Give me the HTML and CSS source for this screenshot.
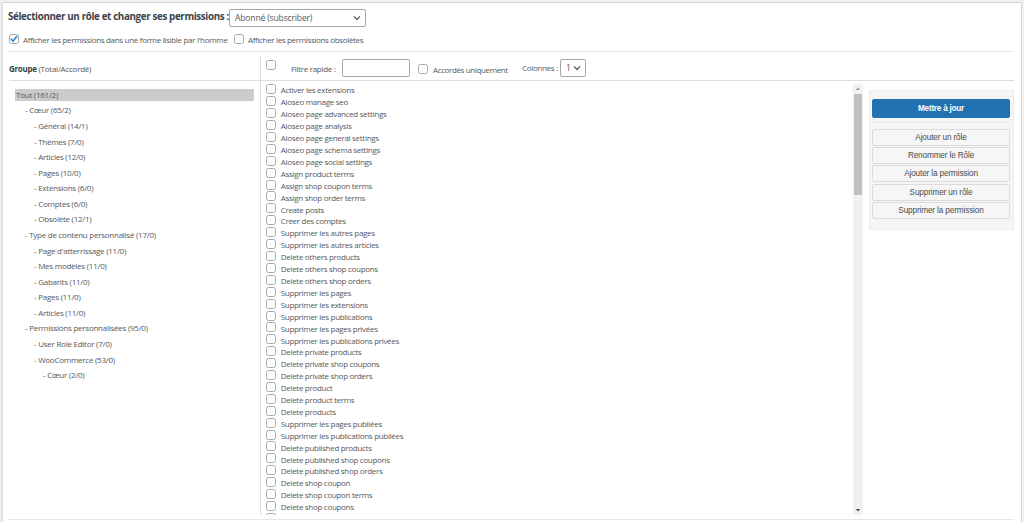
FILE: index.html
```
<!DOCTYPE html>
<html lang="fr">
<head>
<meta charset="utf-8">
<title>User Role Editor</title>
<link rel="stylesheet" href="styles.css">
</head>
<body>
<main class="panel">
  <header class="role-bar">
    <span class="role-label">Sélectionner un rôle et changer ses permissions :</span>
    <div class="select role-select"><span>Abonné (subscriber)</span><svg class="chevron" viewBox="0 0 8 8"><path d="M1 2.3 4 5.5 7 2.3"/></svg></div>
  </header>
  <div class="options">
    <span class="check"><svg viewBox="0 0 10 10"><path d="M2 4.7 4.1 7.2 8 2"/></svg></span><span class="opt-first">Afficher les permissions dans une forme lisible par l'homme</span>
    <span class="check"></span><span class="opt-second">Afficher les permissions obsolètes</span>
  </div>
  <section class="editor">
    <div class="headings">
      <div class="group-title"><b>Groupe</b> <span>(Total/Accordé)</span></div>
      <div class="filters">
        <span class="check check-all"></span>
        <span class="filter-label">Filtre rapide :</span>
        <div class="input"></div>
        <span class="check check-granted"></span>
        <span class="granted">Accordés uniquement</span>
        <span class="columns">Colonnes :</span>
        <div class="select col-select"><span>1</span><svg class="chevron" viewBox="0 0 8 8"><path d="M1 2.3 4 5.5 7 2.3"/></svg></div>
      </div>
    </div>
    <div class="content">
      <ul class="tree">
        <li class="selected"><span>Tout (161/2)</span></li>
        <li class="l1"><span>- Cœur (65/2)</span></li>
        <li class="l2"><span>- Général (14/1)</span></li>
        <li class="l2"><span>- Thèmes (7/0)</span></li>
        <li class="l2"><span>- Articles (12/0)</span></li>
        <li class="l2"><span>- Pages (10/0)</span></li>
        <li class="l2"><span>- Extensions (6/0)</span></li>
        <li class="l2"><span>- Comptes (6/0)</span></li>
        <li class="l2"><span>- Obsolète (12/1)</span></li>
        <li class="l1"><span>- Type de contenu personnalisé (17/0)</span></li>
        <li class="l2"><span>- Page d'atterrissage (11/0)</span></li>
        <li class="l2"><span>- Mes modèles (11/0)</span></li>
        <li class="l2"><span>- Gabarits (11/0)</span></li>
        <li class="l2"><span>- Pages (11/0)</span></li>
        <li class="l2"><span>- Articles (11/0)</span></li>
        <li class="l1"><span>- Permissions personnalisées (95/0)</span></li>
        <li class="l2"><span>- User Role Editor (7/0)</span></li>
        <li class="l2"><span>- WooCommerce (53/0)</span></li>
        <li class="l3"><span>- Cœur (2/0)</span></li>
      </ul>
      <ul class="perms">
        <li><i class="check"></i><span>Activer les extensions</span></li>
        <li><i class="check"></i><span>Aioseo manage seo</span></li>
        <li><i class="check"></i><span>Aioseo page advanced settings</span></li>
        <li><i class="check"></i><span>Aioseo page analysis</span></li>
        <li><i class="check"></i><span>Aioseo page general settings</span></li>
        <li><i class="check"></i><span>Aioseo page schema settings</span></li>
        <li><i class="check"></i><span>Aioseo page social settings</span></li>
        <li><i class="check"></i><span>Assign product terms</span></li>
        <li><i class="check"></i><span>Assign shop coupon terms</span></li>
        <li><i class="check"></i><span>Assign shop order terms</span></li>
        <li><i class="check"></i><span>Create posts</span></li>
        <li><i class="check"></i><span>Créer des comptes</span></li>
        <li><i class="check"></i><span>Supprimer les autres pages</span></li>
        <li><i class="check"></i><span>Supprimer les autres articles</span></li>
        <li><i class="check"></i><span>Delete others products</span></li>
        <li><i class="check"></i><span>Delete others shop coupons</span></li>
        <li><i class="check"></i><span>Delete others shop orders</span></li>
        <li><i class="check"></i><span>Supprimer les pages</span></li>
        <li><i class="check"></i><span>Supprimer les extensions</span></li>
        <li><i class="check"></i><span>Supprimer les publications</span></li>
        <li><i class="check"></i><span>Supprimer les pages privées</span></li>
        <li><i class="check"></i><span>Supprimer les publications privées</span></li>
        <li><i class="check"></i><span>Delete private products</span></li>
        <li><i class="check"></i><span>Delete private shop coupons</span></li>
        <li><i class="check"></i><span>Delete private shop orders</span></li>
        <li><i class="check"></i><span>Delete product</span></li>
        <li><i class="check"></i><span>Delete product terms</span></li>
        <li><i class="check"></i><span>Delete products</span></li>
        <li><i class="check"></i><span>Supprimer les pages publiées</span></li>
        <li><i class="check"></i><span>Supprimer les publications publiées</span></li>
        <li><i class="check"></i><span>Delete published products</span></li>
        <li><i class="check"></i><span>Delete published shop coupons</span></li>
        <li><i class="check"></i><span>Delete published shop orders</span></li>
        <li><i class="check"></i><span>Delete shop coupon</span></li>
        <li><i class="check"></i><span>Delete shop coupon terms</span></li>
        <li><i class="check"></i><span>Delete shop coupons</span></li>
        <li><i class="check"></i></li>
      </ul>
      <div class="scrollbar"><svg viewBox="0 0 10 10"><path class="dim" d="M2.6 6 5 3.5 7.4 6z"/></svg><div class="thumb"></div><svg class="down" viewBox="0 0 10 10"><path d="M2.6 4 5 6.5 7.4 4z"/></svg></div>
      <aside class="actions">
        <button class="primary">Mettre à jour</button>
        <hr>
        <button>Ajouter un rôle</button>
        <button>Renommer le Rôle</button>
        <button>Ajouter la permission</button>
        <button>Supprimer un rôle</button>
        <button>Supprimer la permission</button>
      </aside>
    </div>
  </section>
</main>
</body>
</html>
```
FILE: styles.css
```
* { box-sizing: border-box; }
body {
  margin: 0;
  height: 522px;
  overflow: hidden;
  padding: 2px 2px 0 1px;
  background: #f0f0f1;
  font-family: "Open Sans", "Noto Sans", sans-serif;
  font-size: 8px;
  line-height: 12px;
  letter-spacing: -0.3px;
  color: #55595e;
  white-space: nowrap;
}
ul { list-style: none; margin: 0; padding: 0; }
.panel {
  height: 530px;
  padding: 6px 6px 0 5px;
  background: #fff;
  border: 1px solid #d5d6d8;
  border-left: 2px solid #dfe0e1;
}
.role-bar { display: flex; height: 19px; }
.role-label {
  flex: none;
  width: 221px;
  font-size: 9.8px;
  font-weight: 700;
  line-height: 15px;
  letter-spacing: -0.36px;
  color: #3c434a;
}
.select {
  display: flex;
  flex: none;
  align-items: center;
  justify-content: space-between;
  border: 1px solid #a2a5a9;
  border-radius: 2px;
  background: #fff;
}
.role-select { width: 137px; height: 18px; padding: 0 4px 0 5px; font-size: 8.6px; letter-spacing: -0.18px; }
.chevron { width: 8px; height: 8px; fill: none; stroke: #555a60; stroke-width: 1.2; }
.options { display: flex; height: 23px; padding: 6px 0 0 1px; }
.check {
  display: block;
  flex: none;
  width: 10px;
  height: 10px;
  border: 1px solid #a8abae;
  border-radius: 2.5px;
  background: #fff;
}
.check svg { display: block; width: 10px; height: 10px; margin: -1px; fill: none; stroke: #3582c4; stroke-width: 1.6; }
.opt-first, .opt-second { flex: none; padding-left: 4px; letter-spacing: -0.31px; }
.opt-first { width: 215px; }
.opt-second { letter-spacing: -0.34px; }
.editor { width: 1005px; height: 469px; margin-left: 1px; border-top: 1px solid #e6e6e7; border-bottom: 1px solid #e6e6e7; }
.headings { display: flex; height: 29px; border-bottom: 1px solid #dcdcde; }
.group-title { width: 252px; height: 24px; margin-top: 4px; padding-top: 7px; border-right: 1px solid #dcdcde; }
.group-title b { color: #3c434a; }
.group-title span { letter-spacing: -0.24px; }
.filters { display: flex; padding-left: 5px; }
.filters > * { flex: none; }
.check-all { margin-top: 8px; }
.filter-label { width: 66px; padding: 11px 0 0 15px; }
.input { width: 68px; height: 18px; margin: 7px 8px 0 0; border: 1px solid #a2a5a9; border-radius: 2px; }
.check-granted { margin-top: 12px; }
.granted { width: 94px; padding: 12px 0 0 5px; letter-spacing: -0.37px; }
.columns { width: 38px; padding-top: 10px; letter-spacing: -0.33px; }
.col-select { width: 26px; height: 18px; margin-top: 7px; padding: 0 4px 0 5px; font-size: 8.6px; }
.content { display: flex; height: 434px; }
.tree { width: 252px; padding: 6px 6px 0 6px; border-right: 1px solid #dcdcde; height: 434px; }
.tree li { display: flex; align-items: center; height: 15.58px; letter-spacing: -0.25px; }
.tree .selected { padding-left: 1px; background: linear-gradient(#cbcbcb, #cbcbcb) center / 100% 12px no-repeat; }
.tree .l1 { padding-left: 10px; }
.tree .l2 { padding-left: 19px; }
.tree .l3 { padding-left: 28px; }
.perms { width: 593px; height: 434px; overflow: hidden; padding: 3.3px 0 0 5px; }
.perms li { display: flex; height: 11.91px; }
.perms li span { padding: 0.2px 0 0 5px; }
.scrollbar { width: 10px; height: 431px; margin-top: 3px; background: #f1f1f1; display: flex; flex-direction: column; }
.scrollbar svg { width: 10px; height: 10px; fill: #505050; }
.scrollbar .dim { fill: #a3a3a3; }
.scrollbar .down { margin-top: auto; }
.thumb { width: 8px; height: 101px; margin: 0 1px; background: #c1c1c1; }
.actions {
  width: 145px;
  height: 140px;
  margin: 9px 0 0 6px;
  padding: 8px 3px 0 2px;
  border: 1px solid #ececed;
  background: #f5f5f5;
}
button {
  display: block;
  width: 138px;
  height: 17px;
  margin: 0 0 1.2px;
  padding: 0;
  border: 1px solid #dcdcdd;
  border-radius: 2px;
  background: #f6f6f7;
  font: 8.2px/15px "Liberation Sans", Arial, sans-serif;
  letter-spacing: -0.13px;
  color: #4a4a4a;
}
.primary { height: 19px; line-height: 17px; border-color: #2271b1; background: #2271b1; color: #fff; font-weight: 700; letter-spacing: -0.25px; }
hr { margin: 4px 0 6px; border: 0; border-top: 1px solid #e9e9ea; }
```
